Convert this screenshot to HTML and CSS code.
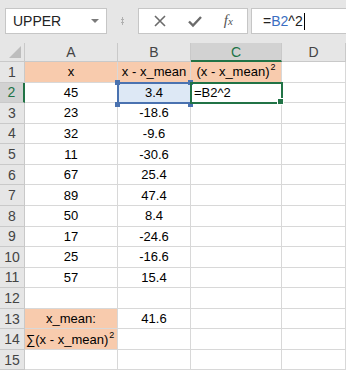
FILE: index.html
```html
<!DOCTYPE html>
<html lang="en">
<head>
<meta charset="UTF-8" />
<meta name="viewport" content="width=device-width, initial-scale=1" />
<title>Sheet</title>
<link rel="stylesheet" href="styles.css">
</head>
<body>
  <div class="toolbar">
    <div class="namebox">
      <span>UPPER</span>
      <span class="caret"></span>
    </div>
    <div class="grip"></div>
    <div class="buttons">
      <svg class="btn" width="14" height="14" viewBox="0 0 14 14"><path d="M2 2 L12 12 M12 2 L2 12" stroke="#6b6b6b" stroke-width="1.6" fill="none"/></svg>
      <svg class="btn" width="16" height="14" viewBox="0 0 16 14"><path d="M2 7.5 L6 11.5 L14 3" stroke="#6b6b6b" stroke-width="2.4" fill="none"/></svg>
      <span class="fx">f<small>x</small></span>
    </div>
    <div class="formula"><span>=</span><span class="ref">B2</span><span>^2</span><span class="cursor"></span></div>
  </div>

  <div class="sheet">
    <div class="corner"></div>
    <div class="colhead">A</div>
    <div class="colhead">B</div>
    <div class="colhead active">C</div>
    <div class="colhead">D</div>

    <div class="rowhead">1</div>
    <div class="cell head">x</div>
    <div class="cell head">x - x_mean</div>
    <div class="cell head"><span>(x - x_mean)<sup>2</sup></span></div>
    <div class="cell"></div>

    <div class="rowhead active">2</div>
    <div class="cell">45</div>
    <div class="cell sel">3.4</div>
    <div class="cell edit">=B2^2</div>
    <div class="cell"></div>

    <div class="rowhead">3</div><div class="cell">23</div><div class="cell">-18.6</div><div class="cell"></div><div class="cell"></div>
    <div class="rowhead">4</div><div class="cell">32</div><div class="cell">-9.6</div><div class="cell"></div><div class="cell"></div>
    <div class="rowhead">5</div><div class="cell">11</div><div class="cell">-30.6</div><div class="cell"></div><div class="cell"></div>
    <div class="rowhead">6</div><div class="cell">67</div><div class="cell">25.4</div><div class="cell"></div><div class="cell"></div>
    <div class="rowhead">7</div><div class="cell">89</div><div class="cell">47.4</div><div class="cell"></div><div class="cell"></div>
    <div class="rowhead">8</div><div class="cell">50</div><div class="cell">8.4</div><div class="cell"></div><div class="cell"></div>
    <div class="rowhead">9</div><div class="cell">17</div><div class="cell">-24.6</div><div class="cell"></div><div class="cell"></div>
    <div class="rowhead">10</div><div class="cell">25</div><div class="cell">-16.6</div><div class="cell"></div><div class="cell"></div>
    <div class="rowhead">11</div><div class="cell">57</div><div class="cell">15.4</div><div class="cell"></div><div class="cell"></div>
    <div class="rowhead">12</div><div class="cell"></div><div class="cell"></div><div class="cell"></div><div class="cell"></div>
    <div class="rowhead">13</div><div class="cell head">x_mean:</div><div class="cell">41.6</div><div class="cell"></div><div class="cell"></div>
    <div class="rowhead">14</div><div class="cell head left"><span>∑(x - x_mean)<sup>2</sup></span></div><div class="cell"></div><div class="cell"></div><div class="cell"></div>
    <div class="rowhead">15</div><div class="cell"></div><div class="cell"></div><div class="cell"></div><div class="cell"></div>
  </div>
</body>
</html>
```

FILE: styles.css
```css
* {
  box-sizing: border-box;
}
body {
  margin: 0;
  width: 346px;
  height: 370px;
  overflow: hidden;
  background: #fff;
  font-family: 'Liberation Sans', Arial, sans-serif;
  color: #000;
}

/* Formula bar */
.toolbar {
  height: 43px;
  background: #e6e6e6;
  display: flex;
  align-items: flex-start;
  padding: 8px 0 0 5px;
}
.namebox {
  width: 102px;
  height: 26px;
  background: #fff;
  border: 1px solid #c6c6c6;
  display: flex;
  align-items: center;
  justify-content: space-between;
  padding: 0 7px 0 7px;
  font-size: 14px;
  color: #222;
}
.caret {
  width: 0;
  height: 0;
  border-left: 4px solid transparent;
  border-right: 4px solid transparent;
  border-top: 4px solid #7a7a7a;
}
.grip {
  width: 31px;
  height: 26px;
  background: radial-gradient(circle, #b0b0b0 1px, transparent 1.3px) center / 3px 3px repeat-y;
  background-size: 3px 3px;
  background-position: center 10px;
  background-clip: content-box;
  padding: 9px 0;
}
.buttons {
  width: 110px;
  height: 26px;
  background: #fff;
  border: 1px solid #c6c6c6;
  display: flex;
  align-items: center;
  justify-content: space-around;
  padding: 0 4px;
}
.fx {
  font-family: 'Liberation Serif', 'Times New Roman', serif;
  font-style: italic;
  font-size: 15px;
  color: #555;
  margin-top: -2px;
}
.fx small {
  font-size: 11px;
}
.formula {
  flex: 1;
  height: 26px;
  margin-left: 3px;
  background: #fff;
  border: 1px solid #c6c6c6;
  border-right: none;
  display: flex;
  align-items: center;
  padding-left: 11px;
  font-size: 14px;
  color: #222;
}
.formula .ref {
  color: #3b6ec2;
}
.cursor {
  width: 1px;
  height: 17px;
  background: #000;
  margin-left: 1px;
}

/* Grid */
.sheet {
  display: grid;
  grid-template-columns: 25px 93px 73px 91px 64px;
  grid-template-rows: 19px repeat(15, 20.57px);
  font-size: 13px;
}
.corner,
.colhead,
.rowhead {
  background: #e6e6e6;
  color: #444;
  border-right: 1px solid #c9c9c9;
  border-bottom: 1px solid #c9c9c9;
  display: flex;
  align-items: center;
  justify-content: center;
  font-size: 14px;
}
.corner {
  position: relative;
}
.corner::after {
  content: '';
  position: absolute;
  right: 3px;
  bottom: 3px;
  border-left: 12px solid transparent;
  border-bottom: 12px solid #bdbdbd;
}
.colhead.active {
  background: #d2d2d2;
  color: #217346;
  border-bottom: 2px solid #217346;
}
.rowhead.active {
  background: #d2d2d2;
  color: #217346;
  border-right: 2px solid #217346;
}
.cell {
  border-right: 1px solid #d8d8d8;
  border-bottom: 1px solid #d8d8d8;
  display: flex;
  align-items: center;
  justify-content: center;
  white-space: nowrap;
  position: relative;
}
.cell.head {
  background: #f8cbad;
}
.cell.left {
  justify-content: flex-start;
  padding-left: 1px;
}
sup {
  font-size: 9px;
  line-height: 0;
  vertical-align: 6px;
  margin-left: 1px;
}

/* Reference highlight on B2 */
.cell.sel {
  background: #dde8f5;
  outline: 2px solid #4a72b0;
  outline-offset: -1px;
  z-index: 1;
}
.cell.sel::before,
.cell.sel::after {
  content: '';
  position: absolute;
  width: 5px;
  height: 5px;
  background: #4a72b0;
  top: -3px;
  left: -3px;
  box-shadow: 0 22px 0 #4a72b0;
}
.cell.sel::after {
  left: auto;
  right: -3px;
}

/* Active cell C2 */
.cell.edit {
  justify-content: flex-start;
  padding-left: 3px;
  outline: 2px solid #217346;
  outline-offset: -1px;
  z-index: 2;
}
.cell.edit::after {
  content: '';
  position: absolute;
  width: 5px;
  height: 5px;
  background: #217346;
  right: -3px;
  bottom: -3px;
  border: 1px solid #fff;
}
```
